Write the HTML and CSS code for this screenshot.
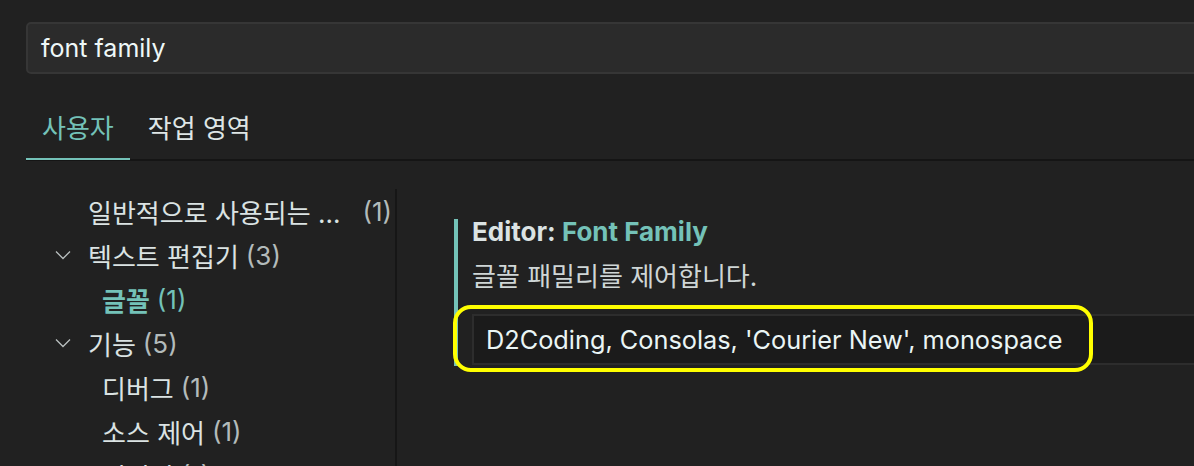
FILE: index.html
```html
<!DOCTYPE html>
<html lang="ko">

<head>
    <meta charset="UTF-8">
    <meta name="viewport" content="width=device-width, initial-scale=1.0">
    <title>Settings - font family</title>
    <link rel="stylesheet" href="styles.css">
</head>

<body>
    <div class="settings">
        <!-- Search -->
        <div class="search-box">
            <span class="search-text">font family</span>
        </div>

        <!-- Scope tabs -->
        <div class="tabs">
            <div class="tab tab-active">사용자</div>
            <div class="tab">작업 영역</div>
        </div>

        <div class="settings-body">
            <!-- Table of contents -->
            <div class="toc">
                <div class="toc-row level-1">
                    <span class="toc-label">일반적으로 사용되는 ...</span>
                    <span class="toc-count count-right">(1)</span>
                </div>
                <div class="toc-row level-1">
                    <svg class="chevron" viewBox="0 0 16 10" width="16" height="10">
                        <path d="M1 1.5 L8 8.5 L15 1.5" fill="none" stroke="#b9bfbf" stroke-width="1.3" />
                    </svg>
                    <span class="toc-label">텍스트 편집기</span>
                    <span class="toc-count">(3)</span>
                </div>
                <div class="toc-row level-2 toc-active">
                    <span class="toc-label">글꼴</span>
                    <span class="toc-count">(1)</span>
                </div>
                <div class="toc-row level-1">
                    <svg class="chevron" viewBox="0 0 16 10" width="16" height="10">
                        <path d="M1 1.5 L8 8.5 L15 1.5" fill="none" stroke="#b9bfbf" stroke-width="1.3" />
                    </svg>
                    <span class="toc-label">기능</span>
                    <span class="toc-count">(5)</span>
                </div>
                <div class="toc-row level-2">
                    <span class="toc-label">디버그</span>
                    <span class="toc-count">(1)</span>
                </div>
                <div class="toc-row level-2">
                    <span class="toc-label">소스 제어</span>
                    <span class="toc-count">(1)</span>
                </div>
                <div class="toc-row level-2">
                    <span class="toc-label">터미널</span>
                    <span class="toc-count">(1)</span>
                </div>
            </div>

            <!-- Setting list -->
            <div class="setting-list">
                <div class="setting-item">
                    <div class="setting-title">
                        <span class="setting-category">Editor: </span><span class="setting-name">Font Family</span>
                    </div>
                    <div class="setting-desc">글꼴 패밀리를 제어합니다.</div>
                    <div class="setting-input">D2Coding, Consolas, 'Courier New', monospace</div>

                    <!-- annotation highlight -->
                    <div class="highlight"></div>
                </div>
            </div>
        </div>
    </div>
</body>

</html>
```

FILE: styles.css
```css
* {
    margin: 0;
    padding: 0;
    box-sizing: border-box;
}

body {
    background-color: #212121;
    font-family: Inter, "Noto Sans CJK KR", sans-serif;
    color: #dbe3e3;
    height: 100vh;
    overflow: hidden;
}

.settings {
    padding: 22px 0 0 26px;
}

/* Search box */
.search-box {
    height: 52px;
    margin-right: -20px;
    background-color: #2b2b2b;
    border: 2px solid #363636;
    border-radius: 5px;
    display: flex;
    align-items: center;
    padding-left: 13px;
}

.search-text {
    font-size: 25px;
    color: #eef8f8;
}

/* Tabs */
.tabs {
    display: flex;
    margin-top: 26px;
    border-bottom: 2px solid #151515;
}

.tab {
    font-size: 26px;
    height: 60px;
    line-height: 58px;
    padding: 0 16px;
    color: #dfe6e6;
    margin-bottom: -1px;
    border-bottom: 2px solid transparent;
}

.tab + .tab {
    padding-left: 18px;
}

.tab-active {
    color: #74c2b8;
    border-bottom-color: #74c2b8;
}

/* Body */
.settings-body {
    display: flex;
    margin-top: 28px;
}

.toc {
    width: 371px;
    border-right: 2px solid #161616;
    padding-right: 3px;
    flex-shrink: 0;
}

.toc-row {
    height: 44px;
    display: flex;
    align-items: center;
    font-size: 26px;
    white-space: nowrap;
}

.level-1 {
    padding-left: 62px;
}

.level-2 {
    padding-left: 76px;
}

.chevron {
    margin-left: -33px;
    margin-right: 17px;
}

.toc-count {
    color: #b3bbbb;
    margin-left: 7px;
}

.count-right {
    margin-left: auto;
}

.toc-active .toc-label {
    color: #74c2b8;
    font-weight: 700;
}

.toc-active .toc-count {
    color: #74c2b8;
}

/* Settings list */
.setting-list {
    flex: 1;
    padding: 30px 0 0 57px;
}

.setting-item {
    position: relative;
    border-left: 4px solid #74c2b8;
    padding-left: 14px;
    padding-bottom: 1px;
}

.setting-title {
    font-size: 26px;
    font-weight: 700;
    line-height: 26px;
}

.setting-category {
    color: #dbe3e3;
}

.setting-name {
    color: #74c2b8;
}

.setting-desc {
    font-size: 26px;
    color: #cfd6d6;
    margin-top: 16px;
    line-height: 32px;
}

.setting-input {
    margin-top: 21px;
    margin-right: -20px;
    height: 51px;
    background-color: #1b1b1b;
    border: 2px solid #2d2d2d;
    font-size: 25.3px;
    color: #eaf5f5;
    display: flex;
    align-items: center;
    padding-left: 12px;
}

.highlight {
    position: absolute;
    left: -5px;
    bottom: -6px;
    width: 640px;
    height: 67px;
    border: 4.5px solid #ffff00;
    border-radius: 18px;
}
```
